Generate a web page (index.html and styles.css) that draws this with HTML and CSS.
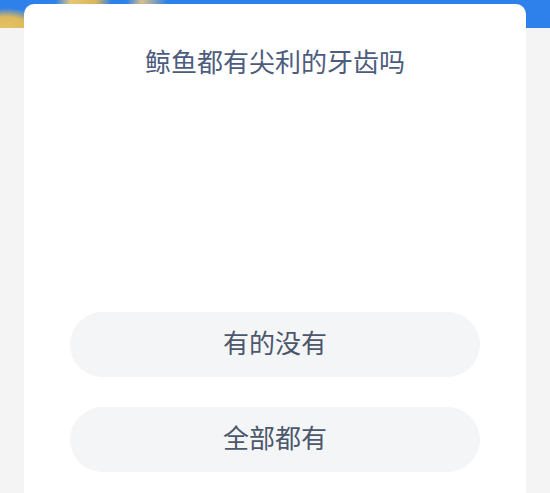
FILE: index.html
```html
<!DOCTYPE html>
<html lang="zh-CN">
<head>
  <meta charset="UTF-8" />
  <meta name="viewport" content="width=device-width, initial-scale=1.0"/>
  <title>答题</title>
  <link rel="stylesheet" href="styles.css">
</head>
<body>
  <div class="banner"></div>

  <div class="card">
    <h1 class="question">鲸鱼都有尖利的牙齿吗</h1>
    <div class="options">
      <button class="option">有的没有</button>
      <button class="option">全部都有</button>
    </div>
  </div>
</body>
</html>
```

FILE: styles.css
```css
body {
  margin: 0;
  background: #f4f4f4;
  font-family: "Noto Sans CJK SC", "Noto Sans", sans-serif;
  overflow: hidden;
}
.banner {
  height: 28px;
  background:
    radial-gradient(ellipse 40px 22px at 6px 30px, #e6c36a 0%, #ddb95c 60%, rgba(221,185,92,0) 100%),
    linear-gradient(100deg, rgba(0,0,0,0) 55px, #e7c877 70px, #d9b45a 95px, rgba(0,0,0,0) 110px, rgba(0,0,0,0) 125px, #d8c287 140px, rgba(0,0,0,0) 165px),
    #2e80eb;
}
.card {
  margin: -24px 24px 0;
  background: #ffffff;
  border-radius: 10px 10px 0 0;
  padding: 39px 46px 21px;
}
.question {
  margin: 0;
  font-size: 26px;
  line-height: 36px;
  font-weight: normal;
  text-align: center;
  color: #4d5c7d;
}
.options {
  margin-top: 233px;
  display: flex;
  flex-direction: column;
  gap: 30px;
}
.option {
  height: 65px;
  padding: 0 0 5px;
  border: none;
  border-radius: 33px;
  background: #f4f5f7;
  font-family: inherit;
  font-size: 26px;
  line-height: 1;
  color: #4b576b;
  cursor: pointer;
}
```
